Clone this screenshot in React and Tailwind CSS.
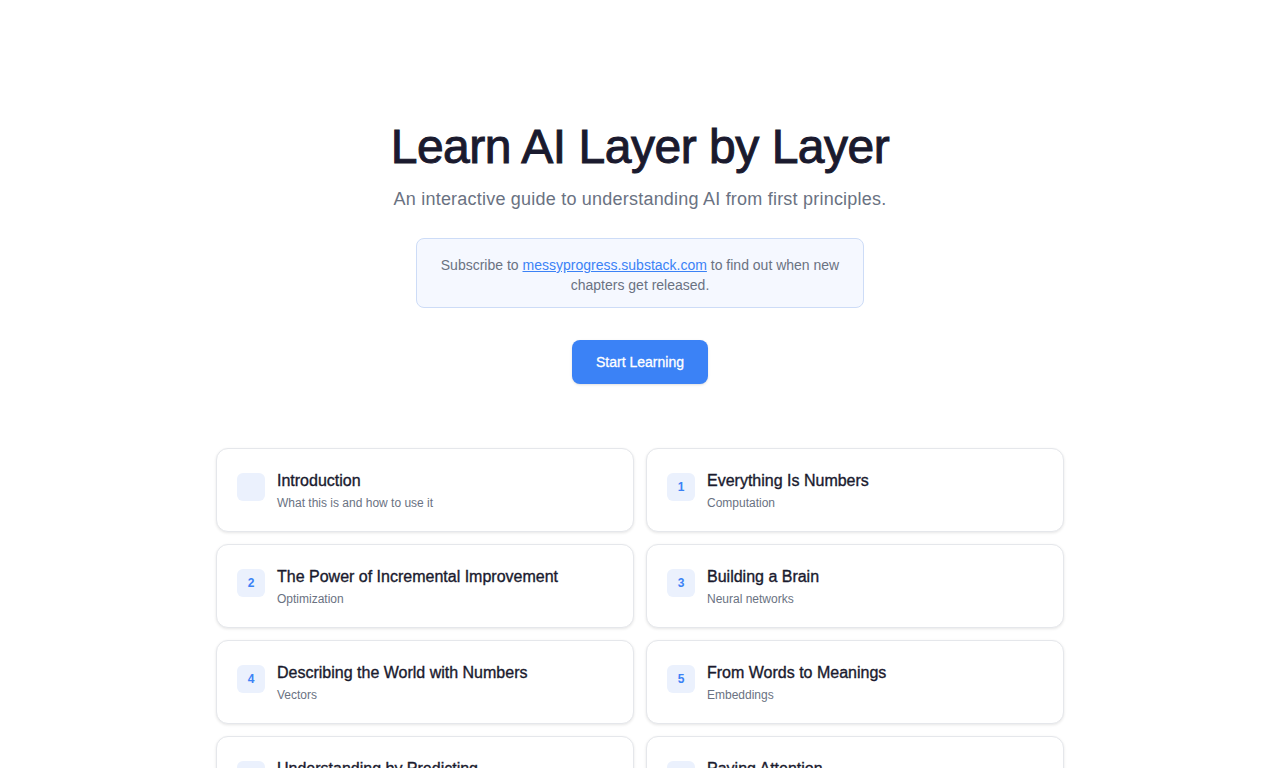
const chapters = [
  { num: "", title: "Introduction", sub: "What this is and how to use it" },
  { num: "1", title: "Everything Is Numbers", sub: "Computation" },
  { num: "2", title: "The Power of Incremental Improvement", sub: "Optimization" },
  { num: "3", title: "Building a Brain", sub: "Neural networks" },
  { num: "4", title: "Describing the World with Numbers", sub: "Vectors" },
  { num: "5", title: "From Words to Meanings", sub: "Embeddings" },
  { num: "6", title: "Understanding by Predicting", sub: "Language models" },
  { num: "7", title: "Paying Attention", sub: "Transformers" },
];

function ChapterCard({ chapter }) {
  return (
    <a
      href="#"
      className="flex items-start gap-3 rounded-xl border border-gray-200 bg-white px-5 py-5 shadow-[0_1px_3px_rgba(0,0,0,0.1)]"
    >
      <div className="mt-1 flex h-7 w-7 shrink-0 items-center justify-center rounded-md bg-[#ebf1fd] text-xs font-bold text-[#3b82f6]">
        {chapter.num}
      </div>
      <div>
        <h3 className="text-base leading-6 text-[#1a1a2e] [-webkit-text-stroke:0.35px_#1a1a2e]">
          {chapter.title}
        </h3>
        <p className="mt-0.5 text-xs leading-4 text-gray-500">{chapter.sub}</p>
      </div>
    </a>
  );
}

export default function App() {
  return (
    <div className="min-h-screen bg-white font-['Liberation_Sans',Arial,sans-serif]">
      <main className="mx-auto flex max-w-[848px] flex-col items-center pt-[123px] pb-16">
        <h1 className="text-5xl leading-[48px] tracking-[-0.01em] text-[#1a1a2e] [-webkit-text-stroke:1px_#1a1a2e]">
          Learn AI Layer by Layer
        </h1>
        <p className="mt-3.5 text-lg leading-7 tracking-[0.012em] text-gray-500">
          An interactive guide to understanding AI from first principles.
        </p>

        <div className="mt-[25px] w-[448px] rounded-lg border border-[#cddcf7] bg-[#f5f8ff] px-4 pt-4 pb-3 text-center text-sm leading-5 text-gray-500">
          Subscribe to{" "}
          <a href="#" className="text-[#3b82f6] underline">
            messyprogress.substack.com
          </a>{" "}
          to find out when new chapters get released.
        </div>

        <button className="mt-8 rounded-lg bg-[#3b82f6] px-6 py-3 text-sm leading-5 text-white shadow-sm [-webkit-text-stroke:0.3px_#ffffff]">
          Start Learning
        </button>

        <div className="mt-16 grid w-full grid-cols-2 gap-3">
          {chapters.map((c) => (
            <ChapterCard key={c.title} chapter={c} />
          ))}
        </div>
      </main>
    </div>
  );
}
